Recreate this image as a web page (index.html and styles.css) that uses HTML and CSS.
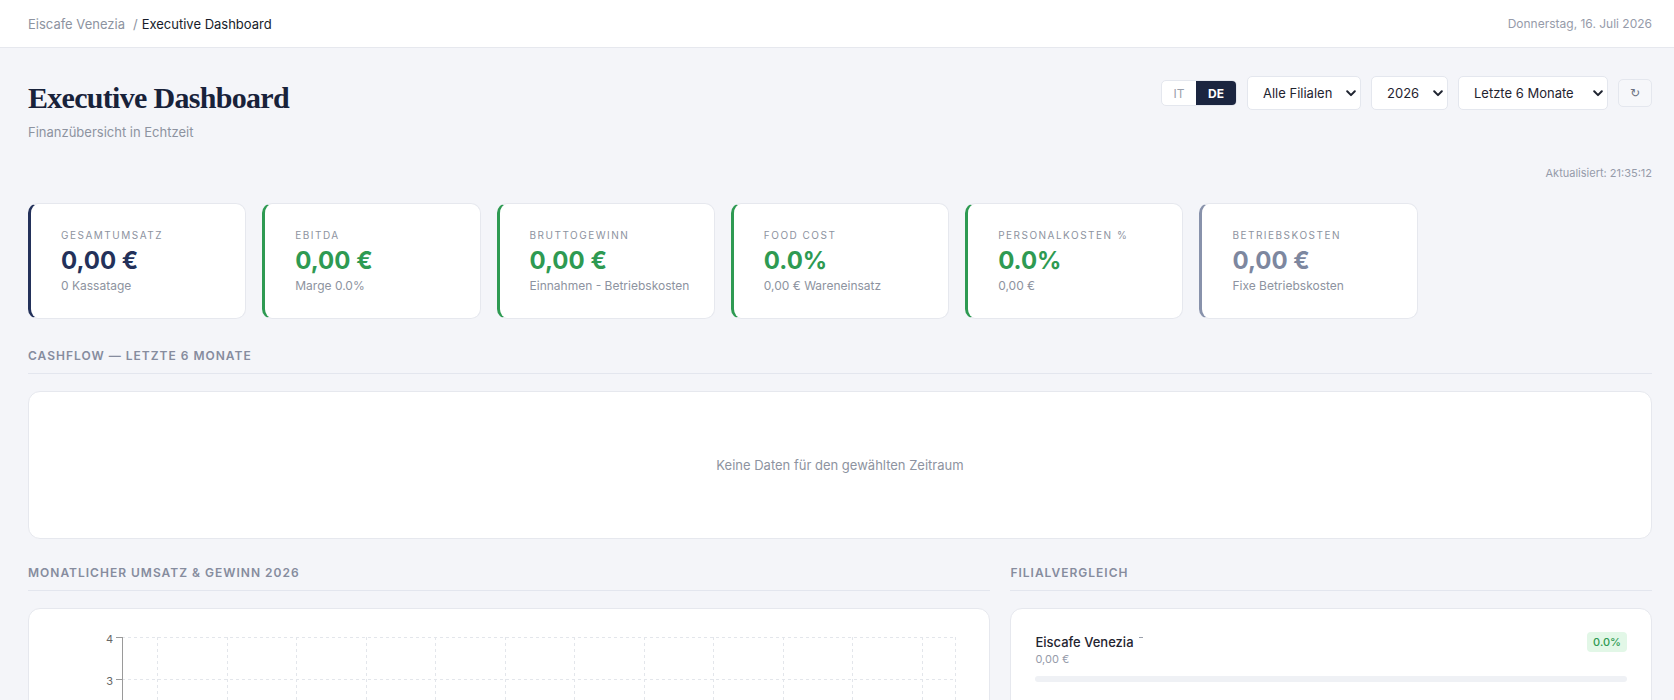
FILE: index.html
```html
<!DOCTYPE html>
<html lang="de">
<head>
<meta charset="utf-8">
<title>Executive Dashboard</title>
<link rel="stylesheet" href="styles.css">
</head>
<body>
<header class="topbar">
  <nav class="crumbs">
    <span class="crumb-muted">Eiscafe Venezia</span>
    <span class="crumb-sep">/</span>
    <span class="crumb-current">Executive Dashboard</span>
  </nav>
  <div class="today">Donnerstag, 16. Juli 2026</div>
</header>

<main class="page">
  <div class="page-head">
    <div class="title-block">
      <h1 class="title">Executive Dashboard</h1>
      <p class="subtitle">Finanzübersicht in Echtzeit</p>
    </div>
    <div class="controls">
      <div class="lang">
        <button class="lang-btn">IT</button>
        <button class="lang-btn active">DE</button>
      </div>
      <span class="sel-wrap sel-branch">
        <select class="sel"><option>Alle Filialen</option></select>
        <svg class="chev" width="10" height="7" viewBox="0 0 10 7"><path d="M1.2 1.3 L5 5.1 L8.8 1.3" fill="none" stroke="#1f2430" stroke-width="2" stroke-linecap="round" stroke-linejoin="round"/></svg>
      </span>
      <span class="sel-wrap sel-year">
        <select class="sel"><option>2026</option></select>
        <svg class="chev" width="10" height="7" viewBox="0 0 10 7"><path d="M1.2 1.3 L5 5.1 L8.8 1.3" fill="none" stroke="#1f2430" stroke-width="2" stroke-linecap="round" stroke-linejoin="round"/></svg>
      </span>
      <span class="sel-wrap sel-range">
        <select class="sel"><option>Letzte 6 Monate</option></select>
        <svg class="chev" width="10" height="7" viewBox="0 0 10 7"><path d="M1.2 1.3 L5 5.1 L8.8 1.3" fill="none" stroke="#1f2430" stroke-width="2" stroke-linecap="round" stroke-linejoin="round"/></svg>
      </span>
      <button class="refresh">↻</button>
    </div>
  </div>

  <div class="updated">Aktualisiert: 21:35:12</div>

  <div class="kpis">
    <div class="kpi kpi-navy">
      <div class="kpi-label">Gesamtumsatz</div>
      <div class="kpi-value">0,00 €</div>
      <div class="kpi-sub">0 Kassatage</div>
    </div>
    <div class="kpi kpi-green">
      <div class="kpi-label">EBITDA</div>
      <div class="kpi-value">0,00 €</div>
      <div class="kpi-sub">Marge 0.0%</div>
    </div>
    <div class="kpi kpi-green">
      <div class="kpi-label">Bruttogewinn</div>
      <div class="kpi-value">0,00 €</div>
      <div class="kpi-sub">Einnahmen - Betriebskosten</div>
    </div>
    <div class="kpi kpi-green">
      <div class="kpi-label">Food Cost</div>
      <div class="kpi-value">0.0%</div>
      <div class="kpi-sub">0,00 € Wareneinsatz</div>
    </div>
    <div class="kpi kpi-green">
      <div class="kpi-label">Personalkosten %</div>
      <div class="kpi-value">0.0%</div>
      <div class="kpi-sub">0,00 €</div>
    </div>
    <div class="kpi kpi-slate">
      <div class="kpi-label">Betriebskosten</div>
      <div class="kpi-value">0,00 €</div>
      <div class="kpi-sub">Fixe Betriebskosten</div>
    </div>
  </div>

  <section class="section">
    <h2 class="sec-title">Cashflow — Letzte 6 Monate</h2>
    <div class="panel empty">Keine Daten für den gewählten Zeitraum</div>
  </section>

  <div class="two-col">
    <section class="section">
      <h2 class="sec-title">Monatlicher Umsatz &amp; Gewinn 2026</h2>
      <div class="panel chart-panel">
        <svg class="chart" width="960" height="300" viewBox="0 0 960 300">
          <g stroke="#e3e6eb" stroke-width="1" stroke-dasharray="3 3" fill="none">
            <line x1="93" y1="28.5" x2="927" y2="28.5"/>
            <line x1="93" y1="70.5" x2="927" y2="70.5"/>
            <line x1="93" y1="112.5" x2="927" y2="112.5"/>
            <line x1="93" y1="154.5" x2="927" y2="154.5"/>
            <line x1="128.5" y1="28" x2="128.5" y2="196"/>
            <line x1="198.5" y1="28" x2="198.5" y2="196"/>
            <line x1="267.5" y1="28" x2="267.5" y2="196"/>
            <line x1="337.5" y1="28" x2="337.5" y2="196"/>
            <line x1="406.5" y1="28" x2="406.5" y2="196"/>
            <line x1="476.5" y1="28" x2="476.5" y2="196"/>
            <line x1="545.5" y1="28" x2="545.5" y2="196"/>
            <line x1="615.5" y1="28" x2="615.5" y2="196"/>
            <line x1="684.5" y1="28" x2="684.5" y2="196"/>
            <line x1="754.5" y1="28" x2="754.5" y2="196"/>
            <line x1="823.5" y1="28" x2="823.5" y2="196"/>
            <line x1="893.5" y1="28" x2="893.5" y2="196"/>
            <line x1="926.5" y1="28" x2="926.5" y2="196"/>
          </g>
          <g stroke="#9a9a9a" stroke-width="1">
            <line x1="93.5" y1="28" x2="93.5" y2="196"/>
            <line x1="87" y1="28.5" x2="93" y2="28.5"/>
            <line x1="87" y1="70.5" x2="93" y2="70.5"/>
            <line x1="87" y1="112.5" x2="93" y2="112.5"/>
            <line x1="87" y1="154.5" x2="93" y2="154.5"/>
            <line x1="87" y1="196.5" x2="93" y2="196.5"/>
            <line x1="93" y1="196.5" x2="927" y2="196.5"/>
          </g>
          <g class="tick" fill="#666" text-anchor="end">
            <text x="84" y="34">4</text>
            <text x="84" y="76">3</text>
          </g>
        </svg>
      </div>
    </section>
    <section class="section">
      <h2 class="sec-title">Filialvergleich</h2>
      <div class="panel branch-panel">
        <div class="branch">
          <div class="branch-row">
            <span class="branch-name">Eiscafe Venezia<span class="trend"></span></span>
            <span class="badge">0.0%</span>
          </div>
          <div class="branch-value">0,00 €</div>
          <div class="bar"><div class="bar-fill" style="width:0%"></div></div>
        </div>
      </div>
    </section>
  </div>
</main>
</body>
</html>
```

FILE: styles.css
```css
* { box-sizing: border-box; }

html, body {
  margin: 0;
  padding: 0;
}

body {
  background: #f4f5f9;
  font-family: Inter, "Noto Sans", sans-serif;
  color: #1f2430;
}

.topbar {
  height: 48px;
  background: #ffffff;
  border-bottom: 1px solid #e6e8ee;
  display: flex;
  align-items: center;
  justify-content: space-between;
  padding: 0 22px 0 28px;
  font-size: 13px;
}

.crumbs {
  display: flex;
  align-items: center;
}

.crumb-muted { color: #8d93a0; }
.crumb-sep { color: #8d93a0; margin: 0 4px 0 8px; }
.crumb-current { color: #161c2a; font-weight: 400; }

.today {
  font-size: 12px;
  color: #969baa;
}

.page {
  padding: 28px 22px 0 28px;
}

.page-head {
  display: flex;
  justify-content: space-between;
  align-items: flex-start;
}

.title {
  margin: 0;
  padding-top: 2px;
  font-family: "Liberation Serif", "Times New Roman", serif;
  font-weight: 700;
  font-size: 30px;
  line-height: 40px;
  letter-spacing: -0.7px;
  color: #18223a;
}

.subtitle {
  margin: 5px 0 0;
  font-size: 13px;
  line-height: 18px;
  color: #8d93a0;
}

.controls {
  display: flex;
  align-items: center;
  gap: 10px;
}

.lang {
  display: flex;
  height: 26px;
  border: 1px solid #e4e7ee;
  border-radius: 5px;
  background: #ffffff;
  overflow: hidden;
}

.lang-btn {
  border: 0;
  margin: 0;
  padding: 0;
  background: transparent;
  font-family: inherit;
  font-size: 12px;
  color: #9aa0ac;
  width: 34px;
}

.lang-btn.active {
  width: 40px;
  background: #1b2540;
  color: #ffffff;
  font-weight: 700;
}

.sel-wrap {
  position: relative;
  display: inline-block;
  height: 34px;
}

.sel-branch { width: 114px; }
.sel-year { width: 77px; }
.sel-range { width: 150px; }

.sel {
  appearance: none;
  -webkit-appearance: none;
  width: 100%;
  height: 34px;
  border: 1px solid #e4e7ee;
  border-radius: 5px;
  background: #ffffff;
  font-family: inherit;
  font-size: 13px;
  color: #1f2430;
  padding: 0 24px 0 15px;
  margin: 0;
}

.chev {
  position: absolute;
  right: 5px;
  top: 14px;
  pointer-events: none;
}

.refresh {
  width: 34px;
  height: 28px;
  border: 1px solid #e4e7ee;
  border-radius: 5px;
  background: #f6f7fa;
  color: #6b7180;
  font-family: "DejaVu Sans", sans-serif;
  font-size: 12px;
  padding: 0;
  margin: 0;
}

.updated {
  margin-top: 24px;
  text-align: right;
  font-size: 11px;
  line-height: 16px;
  color: #969baa;
}

.kpis {
  margin-top: 22px;
  margin-bottom: 29px;
  display: grid;
  grid-template-columns: repeat(auto-fill, minmax(200px, 1fr));
  gap: 16px;
}

.kpi {
  background: #ffffff;
  border: 1px solid #e6e8ee;
  border-left: 3px solid #23315a;
  border-radius: 10px;
  padding: 24px 20px 24px 30px;
}

.kpi-navy { border-left-color: #23315a; }
.kpi-green { border-left-color: #2e9a52; }
.kpi-slate { border-left-color: #8892ab; }

.kpi-label {
  font-size: 10px;
  line-height: 14px;
  letter-spacing: 1.5px;
  text-transform: uppercase;
  color: #8d93a0;
}

.kpi-value {
  margin-top: 5px;
  font-size: 24px;
  line-height: 28px;
  font-weight: 700;
  color: #23315a;
}

.kpi-green .kpi-value { color: #2e9a52; }
.kpi-slate .kpi-value { color: #7d879f; }

.kpi-sub {
  margin-top: 3px;
  font-size: 12px;
  line-height: 16px;
  color: #8d93a0;
}

.section {
  margin-bottom: 26px;
}

.sec-title {
  margin: 0 0 17px;
  padding-bottom: 9px;
  border-bottom: 1px solid #e3e6ee;
  font-size: 12px;
  line-height: 16px;
  font-weight: 600;
  letter-spacing: 1px;
  text-transform: uppercase;
  color: #868c9e;
}

.panel {
  background: #ffffff;
  border: 1px solid #e6e8ee;
  border-radius: 12px;
}

.empty {
  height: 148px;
  display: flex;
  align-items: center;
  justify-content: center;
  font-size: 13px;
  color: #8d93a0;
}

.two-col {
  display: grid;
  grid-template-columns: 3fr 2fr;
  gap: 20px;
}

.chart-panel {
  height: 320px;
  overflow: hidden;
}

.chart {
  display: block;
}

.tick {
  font-family: Inter, "Noto Sans", sans-serif;
  font-size: 11px;
}

.branch-panel {
  padding: 23px 24px 24px;
  min-height: 200px;
}

.branch-row {
  display: flex;
  justify-content: space-between;
  align-items: center;
  height: 20px;
}

.branch-name {
  font-size: 13px;
  font-weight: 500;
  color: #1f2430;
}

.trend {
  display: inline-block;
  width: 4px;
  height: 1px;
  background: #9aa0ac;
  margin-left: 5px;
  vertical-align: 9px;
}

.badge {
  height: 20px;
  line-height: 20px;
  padding: 0 6px;
  border-radius: 4px;
  background: #e2f7e7;
  color: #2e9a52;
  font-size: 11px;
  font-weight: 500;
}

.branch-value {
  font-size: 11px;
  line-height: 15px;
  color: #969baa;
}

.bar {
  margin-top: 9px;
  height: 6px;
  border-radius: 3px;
  background: #eff1f5;
  overflow: hidden;
}

.bar-fill {
  height: 100%;
  background: #2e9a52;
}
```
